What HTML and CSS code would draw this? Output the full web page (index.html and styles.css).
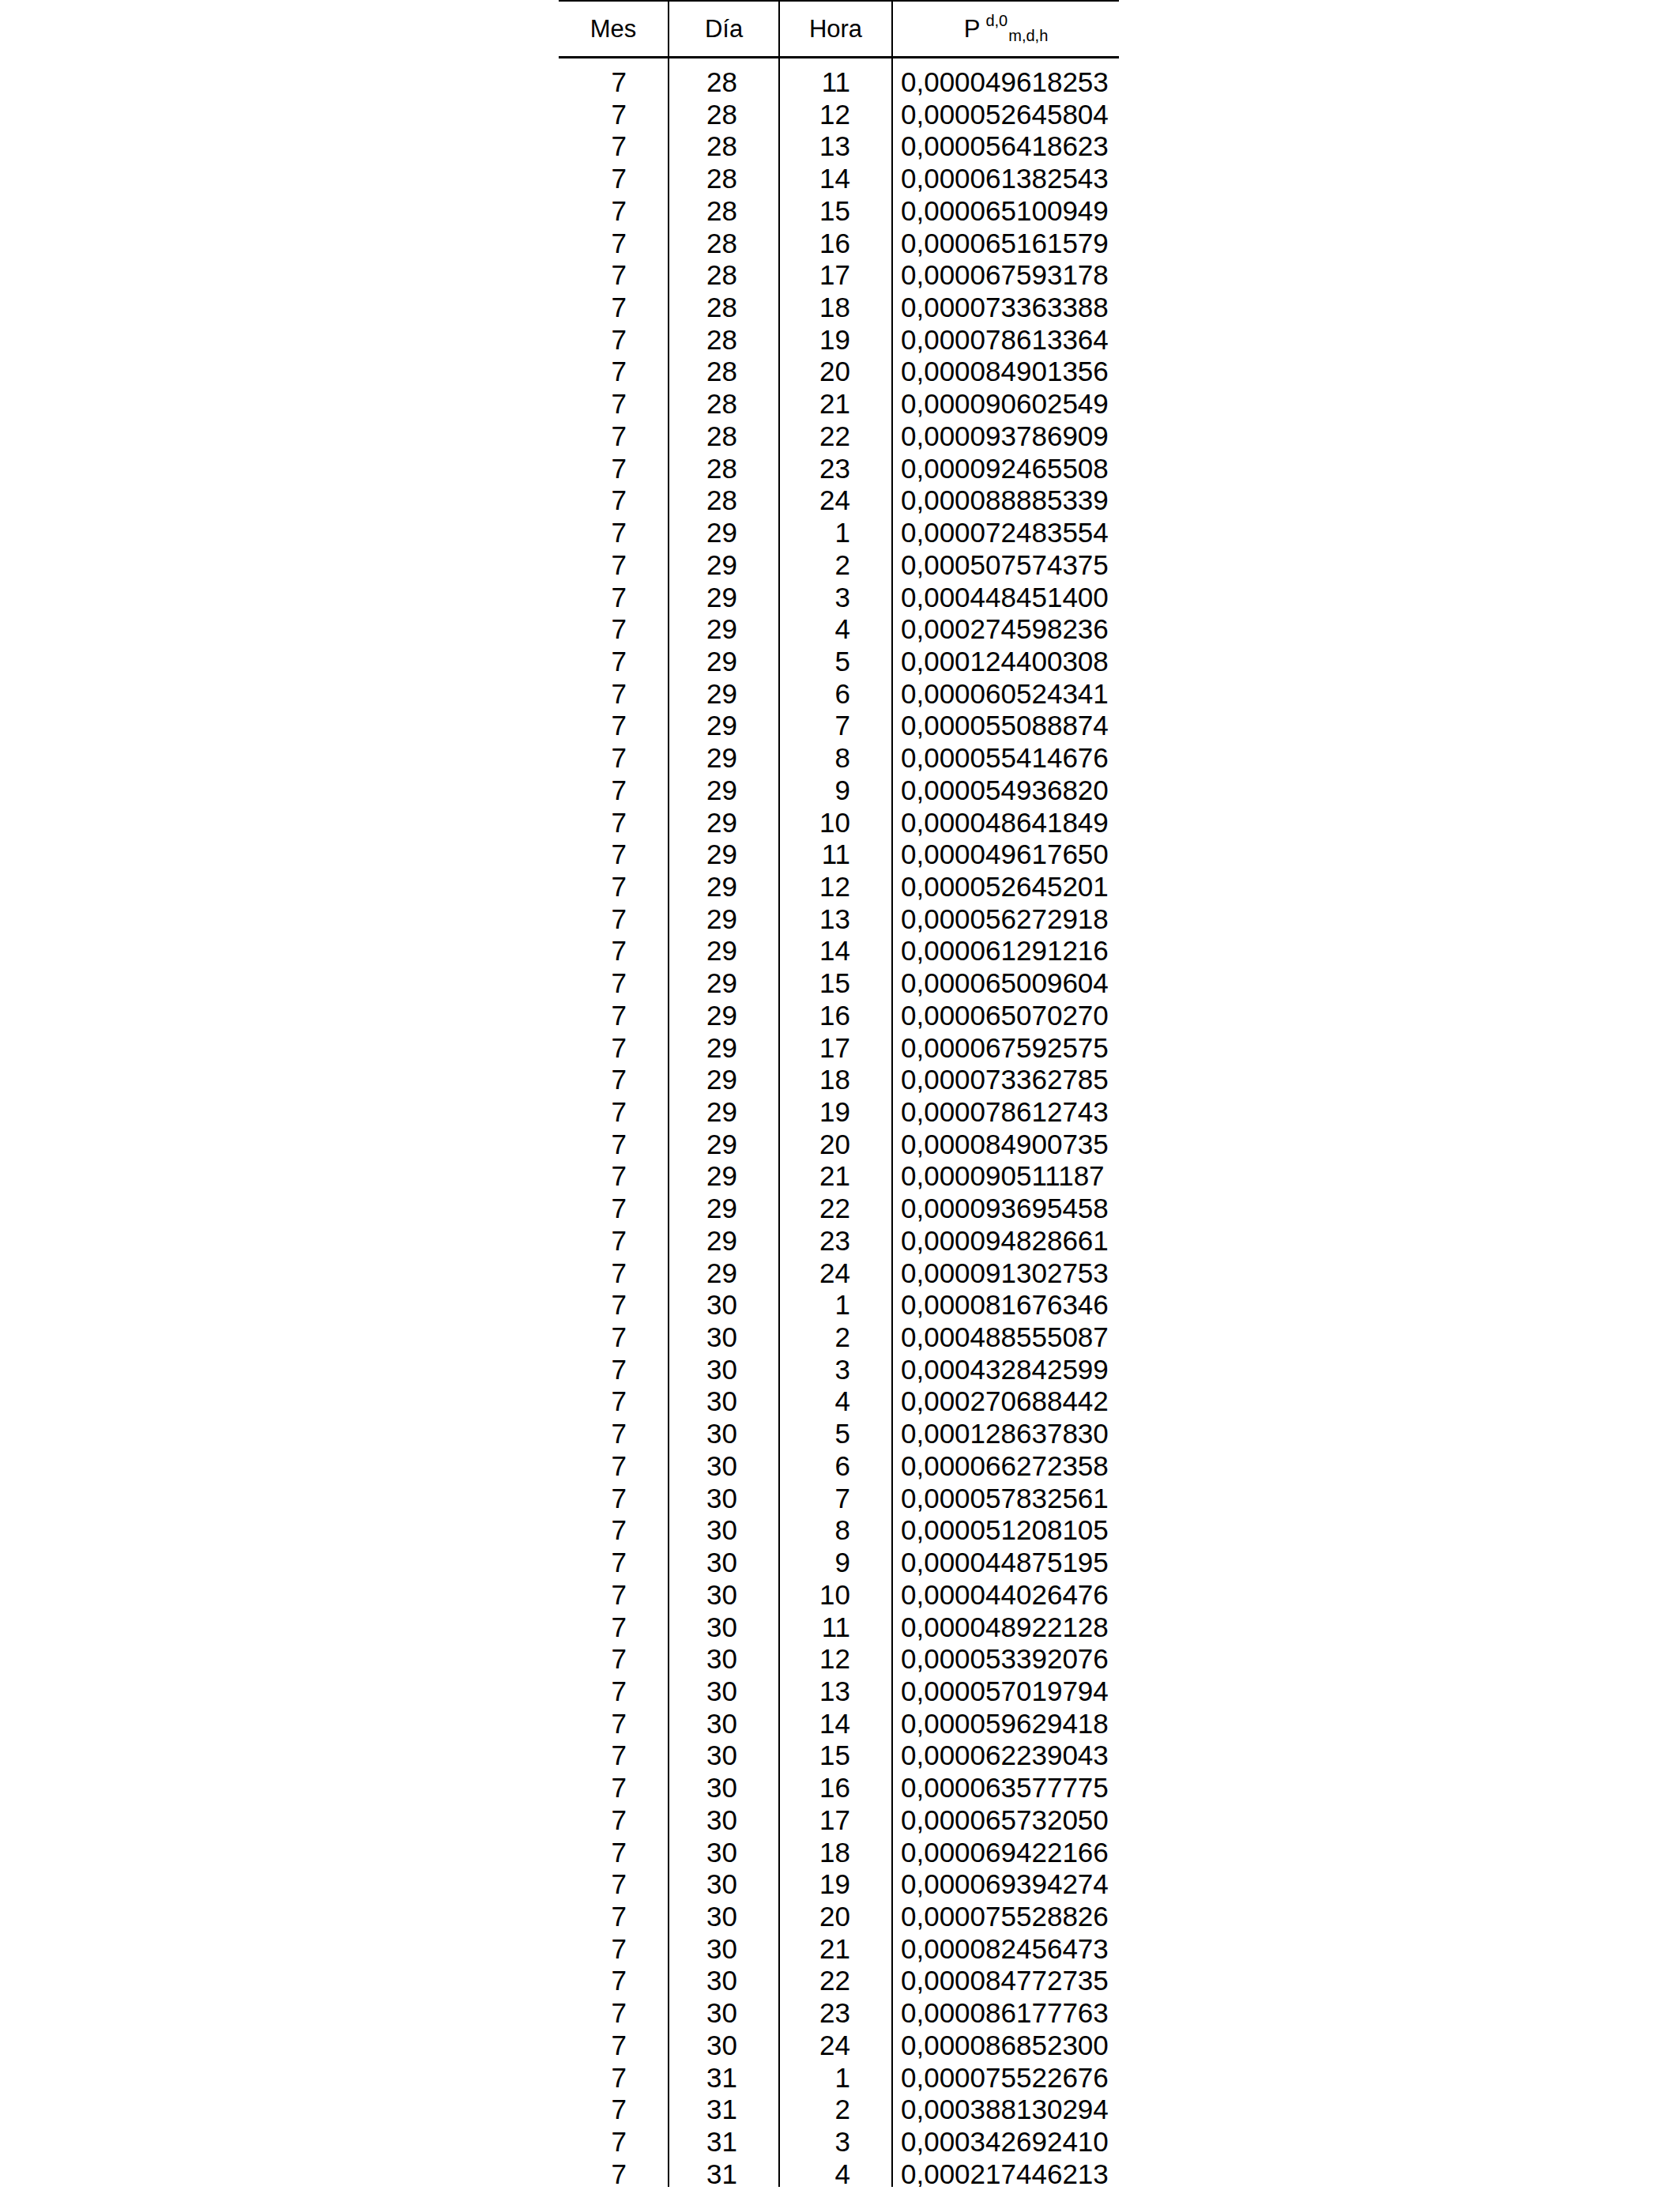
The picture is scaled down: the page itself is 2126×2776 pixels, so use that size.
FILE: index.html
```html
<!DOCTYPE html>
<html lang="es">
<head>
<meta charset="utf-8">
<title>Tabla</title>
<link rel="stylesheet" href="styles.css">
</head>
<body>
<div class="sheet" role="table">
  <div class="row head" role="row">
    <div class="cell" role="columnheader">Mes</div>
    <div class="cell" role="columnheader">Día</div>
    <div class="cell" role="columnheader">Hora</div>
    <div class="cell pcol" role="columnheader"><span class="pmain">P</span><span class="psup">d,0</span><span class="psub">m,d,h</span></div>
  </div>
  <div class="rows" role="rowgroup">
    <div class="row" role="row"><div class="cell">7</div><div class="cell">28</div><div class="cell">11</div><div class="cell val">0,000049618253</div></div>
    <div class="row" role="row"><div class="cell">7</div><div class="cell">28</div><div class="cell">12</div><div class="cell val">0,000052645804</div></div>
    <div class="row" role="row"><div class="cell">7</div><div class="cell">28</div><div class="cell">13</div><div class="cell val">0,000056418623</div></div>
    <div class="row" role="row"><div class="cell">7</div><div class="cell">28</div><div class="cell">14</div><div class="cell val">0,000061382543</div></div>
    <div class="row" role="row"><div class="cell">7</div><div class="cell">28</div><div class="cell">15</div><div class="cell val">0,000065100949</div></div>
    <div class="row" role="row"><div class="cell">7</div><div class="cell">28</div><div class="cell">16</div><div class="cell val">0,000065161579</div></div>
    <div class="row" role="row"><div class="cell">7</div><div class="cell">28</div><div class="cell">17</div><div class="cell val">0,000067593178</div></div>
    <div class="row" role="row"><div class="cell">7</div><div class="cell">28</div><div class="cell">18</div><div class="cell val">0,000073363388</div></div>
    <div class="row" role="row"><div class="cell">7</div><div class="cell">28</div><div class="cell">19</div><div class="cell val">0,000078613364</div></div>
    <div class="row" role="row"><div class="cell">7</div><div class="cell">28</div><div class="cell">20</div><div class="cell val">0,000084901356</div></div>
    <div class="row" role="row"><div class="cell">7</div><div class="cell">28</div><div class="cell">21</div><div class="cell val">0,000090602549</div></div>
    <div class="row" role="row"><div class="cell">7</div><div class="cell">28</div><div class="cell">22</div><div class="cell val">0,000093786909</div></div>
    <div class="row" role="row"><div class="cell">7</div><div class="cell">28</div><div class="cell">23</div><div class="cell val">0,000092465508</div></div>
    <div class="row" role="row"><div class="cell">7</div><div class="cell">28</div><div class="cell">24</div><div class="cell val">0,000088885339</div></div>
    <div class="row" role="row"><div class="cell">7</div><div class="cell">29</div><div class="cell">1</div><div class="cell val">0,000072483554</div></div>
    <div class="row" role="row"><div class="cell">7</div><div class="cell">29</div><div class="cell">2</div><div class="cell val">0,000507574375</div></div>
    <div class="row" role="row"><div class="cell">7</div><div class="cell">29</div><div class="cell">3</div><div class="cell val">0,000448451400</div></div>
    <div class="row" role="row"><div class="cell">7</div><div class="cell">29</div><div class="cell">4</div><div class="cell val">0,000274598236</div></div>
    <div class="row" role="row"><div class="cell">7</div><div class="cell">29</div><div class="cell">5</div><div class="cell val">0,000124400308</div></div>
    <div class="row" role="row"><div class="cell">7</div><div class="cell">29</div><div class="cell">6</div><div class="cell val">0,000060524341</div></div>
    <div class="row" role="row"><div class="cell">7</div><div class="cell">29</div><div class="cell">7</div><div class="cell val">0,000055088874</div></div>
    <div class="row" role="row"><div class="cell">7</div><div class="cell">29</div><div class="cell">8</div><div class="cell val">0,000055414676</div></div>
    <div class="row" role="row"><div class="cell">7</div><div class="cell">29</div><div class="cell">9</div><div class="cell val">0,000054936820</div></div>
    <div class="row" role="row"><div class="cell">7</div><div class="cell">29</div><div class="cell">10</div><div class="cell val">0,000048641849</div></div>
    <div class="row" role="row"><div class="cell">7</div><div class="cell">29</div><div class="cell">11</div><div class="cell val">0,000049617650</div></div>
    <div class="row" role="row"><div class="cell">7</div><div class="cell">29</div><div class="cell">12</div><div class="cell val">0,000052645201</div></div>
    <div class="row" role="row"><div class="cell">7</div><div class="cell">29</div><div class="cell">13</div><div class="cell val">0,000056272918</div></div>
    <div class="row" role="row"><div class="cell">7</div><div class="cell">29</div><div class="cell">14</div><div class="cell val">0,000061291216</div></div>
    <div class="row" role="row"><div class="cell">7</div><div class="cell">29</div><div class="cell">15</div><div class="cell val">0,000065009604</div></div>
    <div class="row" role="row"><div class="cell">7</div><div class="cell">29</div><div class="cell">16</div><div class="cell val">0,000065070270</div></div>
    <div class="row" role="row"><div class="cell">7</div><div class="cell">29</div><div class="cell">17</div><div class="cell val">0,000067592575</div></div>
    <div class="row" role="row"><div class="cell">7</div><div class="cell">29</div><div class="cell">18</div><div class="cell val">0,000073362785</div></div>
    <div class="row" role="row"><div class="cell">7</div><div class="cell">29</div><div class="cell">19</div><div class="cell val">0,000078612743</div></div>
    <div class="row" role="row"><div class="cell">7</div><div class="cell">29</div><div class="cell">20</div><div class="cell val">0,000084900735</div></div>
    <div class="row" role="row"><div class="cell">7</div><div class="cell">29</div><div class="cell">21</div><div class="cell val">0,000090511187</div></div>
    <div class="row" role="row"><div class="cell">7</div><div class="cell">29</div><div class="cell">22</div><div class="cell val">0,000093695458</div></div>
    <div class="row" role="row"><div class="cell">7</div><div class="cell">29</div><div class="cell">23</div><div class="cell val">0,000094828661</div></div>
    <div class="row" role="row"><div class="cell">7</div><div class="cell">29</div><div class="cell">24</div><div class="cell val">0,000091302753</div></div>
    <div class="row" role="row"><div class="cell">7</div><div class="cell">30</div><div class="cell">1</div><div class="cell val">0,000081676346</div></div>
    <div class="row" role="row"><div class="cell">7</div><div class="cell">30</div><div class="cell">2</div><div class="cell val">0,000488555087</div></div>
    <div class="row" role="row"><div class="cell">7</div><div class="cell">30</div><div class="cell">3</div><div class="cell val">0,000432842599</div></div>
    <div class="row" role="row"><div class="cell">7</div><div class="cell">30</div><div class="cell">4</div><div class="cell val">0,000270688442</div></div>
    <div class="row" role="row"><div class="cell">7</div><div class="cell">30</div><div class="cell">5</div><div class="cell val">0,000128637830</div></div>
    <div class="row" role="row"><div class="cell">7</div><div class="cell">30</div><div class="cell">6</div><div class="cell val">0,000066272358</div></div>
    <div class="row" role="row"><div class="cell">7</div><div class="cell">30</div><div class="cell">7</div><div class="cell val">0,000057832561</div></div>
    <div class="row" role="row"><div class="cell">7</div><div class="cell">30</div><div class="cell">8</div><div class="cell val">0,000051208105</div></div>
    <div class="row" role="row"><div class="cell">7</div><div class="cell">30</div><div class="cell">9</div><div class="cell val">0,000044875195</div></div>
    <div class="row" role="row"><div class="cell">7</div><div class="cell">30</div><div class="cell">10</div><div class="cell val">0,000044026476</div></div>
    <div class="row" role="row"><div class="cell">7</div><div class="cell">30</div><div class="cell">11</div><div class="cell val">0,000048922128</div></div>
    <div class="row" role="row"><div class="cell">7</div><div class="cell">30</div><div class="cell">12</div><div class="cell val">0,000053392076</div></div>
    <div class="row" role="row"><div class="cell">7</div><div class="cell">30</div><div class="cell">13</div><div class="cell val">0,000057019794</div></div>
    <div class="row" role="row"><div class="cell">7</div><div class="cell">30</div><div class="cell">14</div><div class="cell val">0,000059629418</div></div>
    <div class="row" role="row"><div class="cell">7</div><div class="cell">30</div><div class="cell">15</div><div class="cell val">0,000062239043</div></div>
    <div class="row" role="row"><div class="cell">7</div><div class="cell">30</div><div class="cell">16</div><div class="cell val">0,000063577775</div></div>
    <div class="row" role="row"><div class="cell">7</div><div class="cell">30</div><div class="cell">17</div><div class="cell val">0,000065732050</div></div>
    <div class="row" role="row"><div class="cell">7</div><div class="cell">30</div><div class="cell">18</div><div class="cell val">0,000069422166</div></div>
    <div class="row" role="row"><div class="cell">7</div><div class="cell">30</div><div class="cell">19</div><div class="cell val">0,000069394274</div></div>
    <div class="row" role="row"><div class="cell">7</div><div class="cell">30</div><div class="cell">20</div><div class="cell val">0,000075528826</div></div>
    <div class="row" role="row"><div class="cell">7</div><div class="cell">30</div><div class="cell">21</div><div class="cell val">0,000082456473</div></div>
    <div class="row" role="row"><div class="cell">7</div><div class="cell">30</div><div class="cell">22</div><div class="cell val">0,000084772735</div></div>
    <div class="row" role="row"><div class="cell">7</div><div class="cell">30</div><div class="cell">23</div><div class="cell val">0,000086177763</div></div>
    <div class="row" role="row"><div class="cell">7</div><div class="cell">30</div><div class="cell">24</div><div class="cell val">0,000086852300</div></div>
    <div class="row" role="row"><div class="cell">7</div><div class="cell">31</div><div class="cell">1</div><div class="cell val">0,000075522676</div></div>
    <div class="row" role="row"><div class="cell">7</div><div class="cell">31</div><div class="cell">2</div><div class="cell val">0,000388130294</div></div>
    <div class="row" role="row"><div class="cell">7</div><div class="cell">31</div><div class="cell">3</div><div class="cell val">0,000342692410</div></div>
    <div class="row" role="row"><div class="cell">7</div><div class="cell">31</div><div class="cell">4</div><div class="cell val">0,000217446213</div></div>
  </div>
</div>
</body>
</html>
```
FILE: styles.css
```css
html, body {
  margin: 0;
  padding: 0;
  background: #ffffff;
}
body {
  font-family: "Liberation Sans", Arial, sans-serif;
  color: #000000;
}
.sheet {
  margin-left: 707px;
  width: 709px;
}
.row {
  display: grid;
  grid-template-columns: 138px 140px 143px 288px;
}
.cell {
  box-sizing: border-box;
  white-space: nowrap;
}
.cell + .cell {
  border-left: 2px solid #000000;
}
/* header */
.head {
  border-top: 2px solid #000000;
  border-bottom: 3px solid #000000;
}
.head .cell {
  height: 69px;
  padding-top: 2px;
  line-height: 66px;
  font-size: 31px;
  text-align: center;
}
.pmain {
  font-size: 31px;
}
.psup {
  font-size: 20px;
  line-height: 1;
  vertical-align: 14px;
  margin-left: 7px;
}
.psub {
  font-size: 20px;
  line-height: 1;
  vertical-align: -5px;
  margin-left: 1px;
}
/* data rows */
.rows .cell {
  height: 40.73px;
  line-height: 40.73px;
  font-size: 35px;
  text-align: right;
  padding-right: 52px;
}
.rows .row:first-child .cell {
  height: 50.73px;
  padding-top: 10px;
}
.rows .row:last-child .cell {
  height: 36px;
}
.rows .cell.val {
  text-align: left;
  padding-right: 0;
  padding-left: 10px;
}
```
